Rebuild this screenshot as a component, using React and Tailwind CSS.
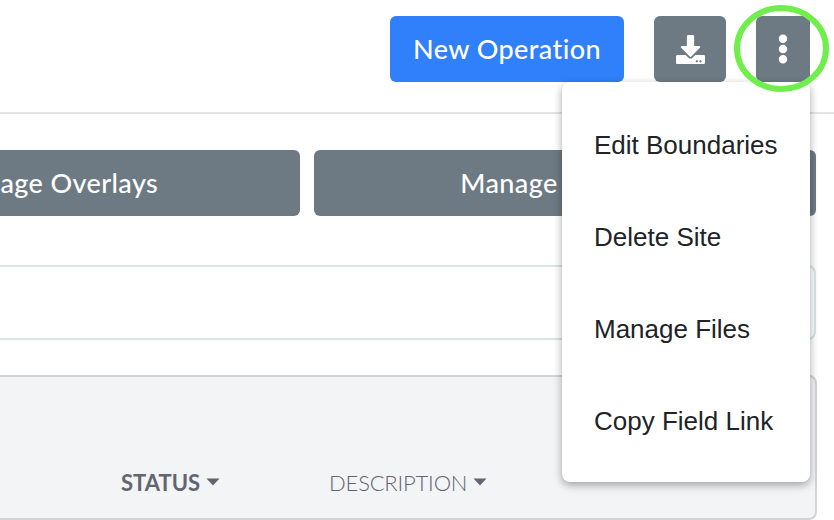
import React from "react";
import { FaDownload, FaEllipsisV } from "react-icons/fa";

const ui = "font-['Lato','Open_Sans',sans-serif]";

function Caret() {
  return (
    <svg width="14" height="8" viewBox="0 0 14 8" className="ml-[6px] mt-[-2px]">
      <path d="M0.5 0.5H13.5L7 7.5Z" fill="#63646d" />
    </svg>
  );
}

export default function App() {
  return (
    <div className={`relative w-[834px] h-[520px] overflow-hidden bg-white ${ui}`}>
      <header className="flex h-[114px] items-start justify-end gap-[30px] border-b-2 border-[#e3e3e9] pt-4 pr-6">
        <button className="h-[66px] w-[234px] rounded-md bg-[#2f80fa] text-[27px] font-medium tracking-[0.4px] text-white">
          New Operation
        </button>
        <button className="flex h-[66px] w-[72px] items-center justify-center rounded-md bg-[#6d7a84] text-white">
          <FaDownload size={29} />
        </button>
        <button className="flex h-[66px] w-[54px] items-center justify-center rounded-md bg-[#6d7a84] text-white">
          <FaEllipsisV size={30} />
        </button>
      </header>

      <div className="mt-9 ml-[-240px] flex gap-[14px]">
        <button className="h-[66px] w-[540px] shrink-0 rounded-md bg-[#6d7a84] pl-[44px] text-[27px] font-medium tracking-[0.4px] text-white">
          Manage Overlays
        </button>
        <button className="h-[66px] w-[502px] shrink-0 rounded-md bg-[#6d7a84] pr-[26px] text-[27px] font-medium tracking-[0.4px] text-white">
          Manage Layers
        </button>
      </div>

      <div className="mt-[49px] ml-[-20px] mr-[18px] h-[75px] rounded-lg border-2 border-[#d9e5e6] bg-white" />

      <div className="mt-[35px] ml-[-20px] mr-[17px] flex h-[145px] items-end rounded-lg border-2 border-[#d2d4d6] bg-[#f3f4f6] pb-[21px] pl-[139px] text-[22px] leading-[28px] text-[#63646d]">
        <span className="flex items-center font-bold">
          STATUS
          <Caret />
        </span>
        <span className="ml-[109px] flex items-center font-light tracking-[-0.2px]">
          DESCRIPTION
          <Caret />
        </span>
      </div>

      <ul className="absolute left-[562px] top-[82px] w-[248px] rounded-lg bg-white pt-[17px] pb-[15px] pl-[32px] font-['Liberation_Sans',Arial,sans-serif] text-[26px] text-[#212326] shadow-[0_3px_8px_rgba(0,0,0,0.35)]">
        <li className="flex h-[92px] items-center">Edit Boundaries</li>
        <li className="flex h-[92px] items-center">Delete Site</li>
        <li className="flex h-[92px] items-center">Manage Files</li>
        <li className="flex h-[92px] items-center">Copy Field Link</li>
      </ul>

      <svg className="absolute left-[730px] top-0" width="104" height="96" viewBox="0 0 104 96" fill="none">
        <ellipse cx="51.5" cy="48.5" rx="44.5" ry="40.5" stroke="#70ef4c" strokeWidth="6" />
      </svg>
    </div>
  );
}
